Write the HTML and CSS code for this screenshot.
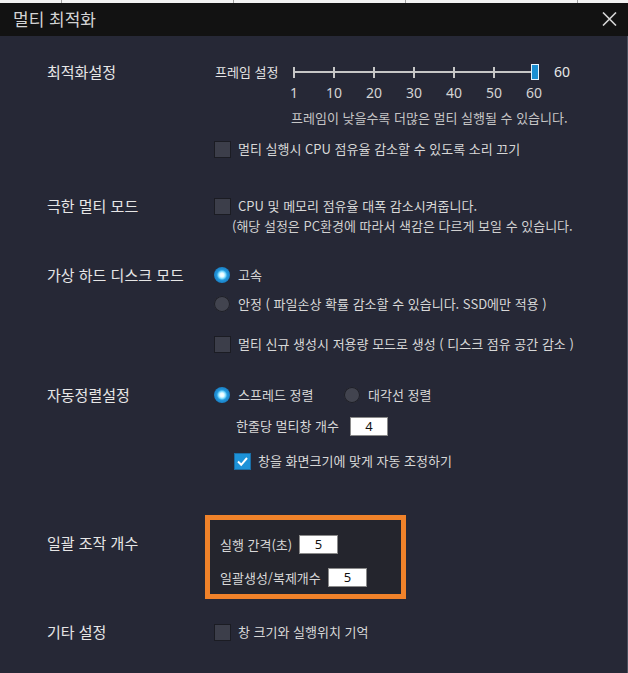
FILE: index.html
```html
<!DOCTYPE html>
<html lang="ko">
<head>
<meta charset="utf-8">
<title>멀티 최적화</title>
<link rel="stylesheet" href="styles.css">
</head>
<body>
<div class="window">
  <div class="topstrip"><span class="c0"></span><span></span><span></span><span></span><span class="clast"></span></div>
  <div class="titlebar">
    <span class="title">멀티 최적화</span>
    <svg class="close" width="15" height="14" viewBox="0 0 15 14"><path d="M1 0.5 L14 13.5 M14 0.5 L1 13.5" stroke="#d6d6d6" stroke-width="1.6" fill="none"/></svg>
  </div>
  <div class="content">
    <section class="row s1">
      <div class="label">최적화설정</div>
      <div class="body">
        <div class="slider">
          <span class="slabel">프레임 설정</span>
          <div class="track"><i></i><i></i><i></i><i></i><i></i><i></i><b class="thumb"></b></div>
          <span class="sval">60</span>
        </div>
        <div class="ticklabels"><span>1</span><span>10</span><span>20</span><span>30</span><span>40</span><span>50</span><span>60</span></div>
        <div class="help">프레임이 낮을수록 더많은 멀티 실행될 수 있습니다.</div>
        <div class="check mt11"><span class="box"></span><span>멀티 실행시 CPU 점유율 감소할 수 있도록 소리 끄기</span></div>
      </div>
    </section>

    <section class="row s2">
      <div class="label">극한 멀티 모드</div>
      <div class="body">
        <div class="check"><span class="box"></span><span>CPU 및 메모리 점유율 대폭 감소시켜줍니다.</span></div>
        <div class="note">(해당 설정은 PC환경에 따라서 색감은 다르게 보일 수 있습니다.</div>
      </div>
    </section>

    <section class="row s3">
      <div class="label">가상 하드 디스크 모드</div>
      <div class="body">
        <div class="radio on"><span class="dot"></span><span>고속</span></div>
        <div class="radio mt9"><span class="dot"></span><span>안정 ( 파일손상 확률 감소할 수 있습니다. SSD에만 적용 )</span></div>
        <div class="check mt20"><span class="box"></span><span>멀티 신규 생성시 저용량 모드로 생성 ( 디스크 점유 공간 감소 )</span></div>
      </div>
    </section>

    <section class="row s4">
      <div class="label">자동정렬설정</div>
      <div class="body">
        <div class="radios">
          <div class="radio on first"><span class="dot"></span><span>스프레드 정렬</span></div>
          <div class="radio"><span class="dot"></span><span>대각선 정렬</span></div>
        </div>
        <div class="field perline"><span class="flabel w114">한줄당 멀티창 개수</span><span class="input w38">4</span></div>
        <div class="check checked fit"><span class="box"><svg width="17" height="17" viewBox="0 0 17 17"><path d="M4 8.5 L7.2 11.8 L13 5" stroke="#fff" stroke-width="2" fill="none"/></svg></span><span>창을 화면크기에 맞게 자동 조정하기</span></div>
      </div>
    </section>

    <section class="row s5">
      <div class="label lpad">일괄 조작 개수</div>
      <div class="body">
        <div class="hlbox">
          <div class="field"><span class="flabel w79">실행 간격(초)</span><span class="input w39">5</span></div>
          <div class="field mt14"><span class="flabel w108">일괄생성/복제개수</span><span class="input w39">5</span></div>
        </div>
      </div>
    </section>

    <section class="row s6">
      <div class="label">기타 설정</div>
      <div class="body">
        <div class="check"><span class="box"></span><span>창 크기와 실행위치 기억</span></div>
      </div>
    </section>
  </div>
</div>
</body>
</html>
```

FILE: styles.css
```css
html, body {
  margin: 0;
  padding: 0;
  background: #262836;
}
body {
  font-family: "Noto Sans CJK KR", "Noto Sans", sans-serif;
  color: #d8d8d8;
  width: 628px;
  height: 673px;
  overflow: hidden;
}
.window {
  width: 628px;
  height: 673px;
  display: flex;
  flex-direction: column;
}
.topstrip {
  height: 3px;
  display: flex;
  background: #f2f2f2;
}
.topstrip span {
  width: 171px;
  border-right: 1px solid #a0a0a0;
  flex: none;
}
.topstrip span.c0 { width: 61px; }
.topstrip span.clast { border-right: none; flex: 1; }
.titlebar {
  height: 33px;
  background: #121212;
  display: flex;
  align-items: center;
  justify-content: space-between;
  padding: 0 11px 0 13px;
  flex: none;
}
.title {
  font-size: 17px;
  color: #d4d4d4;
  line-height: 20px;
  margin-top: -1px;
}
.close { display: block; margin-top: -2px; }
.content {
  flex: 1;
  background: #262836;
  border-right: 1px solid #4a505e;
  padding: 26px 0 0 47px;
}
.row {
  display: grid;
  grid-template-columns: 167px 1fr;
}
.label {
  font-size: 15px;
  line-height: 20px;
  color: #e6e6e6;
  white-space: nowrap;
}
.body {
  font-size: 13px;
  line-height: 20px;
  white-space: nowrap;
}
.s2 { margin-top: 37px; }
.s3 { margin-top: 29px; }
.s4 { margin-top: 31px; }
.s5 { margin-top: 44px; }
.s6 { margin-top: 23px; }
.mt9 { margin-top: 9px; }
.mt11 { margin-top: 11px; }
.mt14 { margin-top: 14px; }
.mt20 { margin-top: 20px; }

/* slider */
.slider {
  display: flex;
  align-items: center;
  height: 20px;
}
.slabel {
  font-size: 13px;
  width: 78px;
  padding-left: 1px;
  color: #e4e4e4;
}
.track {
  display: flex;
  align-items: center;
  gap: 38px;
  height: 20px;
  background: linear-gradient(#c6c6c6, #c6c6c6) left center / 100% 2px no-repeat;
}
.track i {
  display: block;
  width: 2px;
  height: 11px;
  background: #c6c6c6;
}
.track .thumb {
  display: block;
  width: 6px;
  height: 14px;
  margin-left: -2px;
  background: #1b8fd2;
  border: 1px solid #e6f4ff;
}
.sval {
  font-family: "Noto Sans", sans-serif;
  font-size: 14px;
  margin-left: 15px;
  color: #e8e8e8;
}
.ticklabels {
  display: flex;
  margin-top: 1px;
  padding-left: 60px;
  font-family: "Noto Sans", sans-serif;
  font-size: 14px;
  color: #d4d4d4;
}
.ticklabels span {
  width: 40px;
  text-align: center;
}
.help {
  margin-top: 5px;
  padding-left: 77px;
  color: #c6c6c6;
}

/* checkbox */
.check {
  display: flex;
  align-items: center;
  gap: 7px;
  height: 20px;
}
.check .box {
  width: 15px;
  height: 15px;
  background: #3c3e4a;
  border: 1px solid #1b1c23;
  flex: none;
  display: flex;
  align-items: center;
  justify-content: center;
}
.check.checked .box {
  background: #1d92d8;
  border-color: #1a6ea6;
}
.check.checked .box svg { display: block; margin: -1px; }
.check.fit {
  margin-top: 15px;
  padding-left: 20px;
}
.note {
  padding-left: 18px;
  color: #d0d0d0;
}

/* radio */
.radios { display: flex; }
.radio {
  display: flex;
  align-items: center;
  gap: 8px;
  height: 20px;
}
.radio.first { width: 130px; }
.radio .dot {
  width: 16px;
  height: 16px;
  border-radius: 50%;
  background: #42444f;
  box-shadow: inset 0 0 0 1px #1e1f27;
  flex: none;
}
.radio.on .dot {
  background: radial-gradient(circle at 50% 50%, #ffffff 0, #e8fbff 2px, #7fdcff 3.6px, #2398dc 5.2px, #1a7fc4 8px);
  box-shadow: none;
}

/* fields */
.field {
  display: flex;
  align-items: center;
  height: 19px;
}
.field.perline {
  margin-top: 11px;
  padding-left: 22px;
  height: 20px;
}
.flabel { flex: none; }
.w114 { width: 114px; }
.w79 { width: 79px; }
.w108 { width: 108px; }
.input {
  box-sizing: border-box;
  height: 19px;
  background: #ffffff;
  border: 1px solid #8a8a8a;
  color: #111;
  font-family: "Noto Sans", sans-serif;
  font-size: 13px;
  line-height: 17px;
  text-align: center;
}
.w38 { width: 38px; }
.w39 { width: 39px; }

/* highlight box */
.hlbox {
  margin-left: -9px;
  width: 201px;
  border: 5px solid #f0822a;
  background: #24252d;
  padding: 15px 0 7px 10px;
  box-sizing: border-box;
}
.lpad { padding-top: 18px; }
```
